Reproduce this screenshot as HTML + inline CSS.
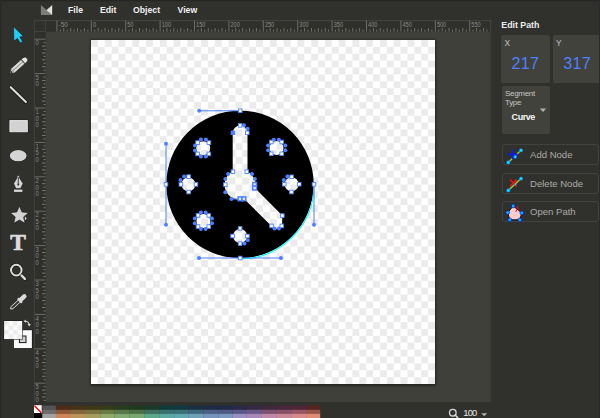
<!DOCTYPE html>
<html><head><meta charset="utf-8">
<style>
html,body{margin:0;padding:0;overflow:hidden;}
body{width:600px;height:418px;overflow:hidden;background:#30302d;position:relative;font-family:"Liberation Sans",sans-serif;}
.abs{position:absolute;}
.menu{position:absolute;top:3.5px;font-size:8.7px;font-weight:bold;color:#f2f2f2;line-height:12px;}
.panel-title{position:absolute;left:501.3px;top:19.6px;font-size:8.8px;font-weight:bold;color:#ececec;}
.box{position:absolute;background:#42423d;border-radius:2px;}
.lbl{position:absolute;font-size:8px;color:#b4b4b0;}
.num{position:absolute;font-size:16.1px;letter-spacing:0.35px;color:#4f80ff;}
.btn{position:absolute;left:501.5px;width:97px;height:21px;border:1px solid #42423e;border-radius:3px;box-sizing:border-box;}
.btxt{position:absolute;left:27.6px;top:4.2px;letter-spacing:-0.04px;font-size:9.6px;color:#acaca8;white-space:nowrap;}
svg{position:absolute;left:0;top:0;}
</style></head><body>
<div class="btn" style="top:144.3px"><div class="btxt">Add Node</div></div>
<div class="btn" style="top:173.3px"><div class="btxt">Delete Node</div></div>
<div class="btn" style="top:201.3px"><div class="btxt">Open Path</div></div>
<div class="box" style="left:501.3px;top:34.6px;width:48.3px;height:48px"></div>
<div class="box" style="left:553px;top:34.6px;width:60px;height:48px"></div>
<div class="box" style="left:501.5px;top:86px;width:48.3px;height:48.2px"></div>
<svg width="600" height="418" viewBox="0 0 600 418">
<defs>
<pattern id="chk" x="91" y="40" width="13.76" height="13.76" patternUnits="userSpaceOnUse">
<rect width="13.76" height="13.76" fill="#fff"/>
<rect width="6.88" height="6.88" fill="#ebebeb"/>
<rect x="6.88" y="6.88" width="6.88" height="6.88" fill="#ebebeb"/>
</pattern>
<filter id="sh" x="-5%" y="-5%" width="110%" height="110%"><feGaussianBlur stdDeviation="0.9"/></filter>
<pattern id="chk2" x="4.1" y="321" width="9" height="9" patternUnits="userSpaceOnUse">
<rect width="9" height="9" fill="#fbfbfb"/>
<rect width="4.5" height="4.5" fill="#ececec"/>
<rect x="4.5" y="4.5" width="4.5" height="4.5" fill="#ececec"/>
</pattern>
</defs>
<rect x="0" y="0" width="600" height="1.2" fill="#252523"/>
<rect x="0" y="0" width="1.2" height="418" fill="#282826"/>
<rect x="599" y="0" width="1" height="418" fill="#2a2a28"/>
<!-- workarea -->
<rect x="45.6" y="31.5" width="445.2" height="370.6" fill="#40403a"/>
<!-- ruler corner lines -->
<rect x="34" y="20" width="456.8" height="11.5" fill="#2f2f2c"/>
<rect x="34" y="31.5" width="11.6" height="370.6" fill="#2f2f2c"/>
<line x1="34" y1="20.7" x2="491.2" y2="20.7" stroke="#4a4a46" stroke-width="0.9"/>
<line x1="490.7" y1="20.5" x2="490.7" y2="31.5" stroke="#4a4a46" stroke-width="0.9"/>
<line x1="34.4" y1="20" x2="34.4" y2="402" stroke="#464642" stroke-width="0.8"/>
<line x1="45.6" y1="20" x2="45.6" y2="31.5" stroke="#464642" stroke-width="0.8"/>
<line x1="34" y1="31.5" x2="45.6" y2="31.5" stroke="#464642" stroke-width="0.8"/>
<line x1="56.90" y1="20.6" x2="56.90" y2="31.6" stroke="#74746e" stroke-width="0.9"/>
<text x="58.50" y="26.9" font-size="6.3" fill="#8e8e88" textLength="9.3" lengthAdjust="spacingAndGlyphs">-50</text>
<line x1="60.34" y1="29.60" x2="60.34" y2="31.6" stroke="#7a7a74" stroke-width="0.9"/>
<line x1="63.78" y1="28.10" x2="63.78" y2="31.6" stroke="#7a7a74" stroke-width="0.9"/>
<line x1="67.22" y1="29.60" x2="67.22" y2="31.6" stroke="#7a7a74" stroke-width="0.9"/>
<line x1="70.66" y1="28.10" x2="70.66" y2="31.6" stroke="#7a7a74" stroke-width="0.9"/>
<line x1="74.10" y1="29.60" x2="74.10" y2="31.6" stroke="#7a7a74" stroke-width="0.9"/>
<line x1="77.54" y1="28.10" x2="77.54" y2="31.6" stroke="#7a7a74" stroke-width="0.9"/>
<line x1="80.98" y1="29.60" x2="80.98" y2="31.6" stroke="#7a7a74" stroke-width="0.9"/>
<line x1="84.42" y1="28.10" x2="84.42" y2="31.6" stroke="#7a7a74" stroke-width="0.9"/>
<line x1="87.86" y1="29.60" x2="87.86" y2="31.6" stroke="#7a7a74" stroke-width="0.9"/>
<line x1="91.30" y1="20.6" x2="91.30" y2="31.6" stroke="#74746e" stroke-width="0.9"/>
<text x="92.90" y="26.9" font-size="6.3" fill="#8e8e88" textLength="3.1" lengthAdjust="spacingAndGlyphs">0</text>
<line x1="94.74" y1="29.60" x2="94.74" y2="31.6" stroke="#7a7a74" stroke-width="0.9"/>
<line x1="98.18" y1="28.10" x2="98.18" y2="31.6" stroke="#7a7a74" stroke-width="0.9"/>
<line x1="101.62" y1="29.60" x2="101.62" y2="31.6" stroke="#7a7a74" stroke-width="0.9"/>
<line x1="105.06" y1="28.10" x2="105.06" y2="31.6" stroke="#7a7a74" stroke-width="0.9"/>
<line x1="108.50" y1="29.60" x2="108.50" y2="31.6" stroke="#7a7a74" stroke-width="0.9"/>
<line x1="111.94" y1="28.10" x2="111.94" y2="31.6" stroke="#7a7a74" stroke-width="0.9"/>
<line x1="115.38" y1="29.60" x2="115.38" y2="31.6" stroke="#7a7a74" stroke-width="0.9"/>
<line x1="118.82" y1="28.10" x2="118.82" y2="31.6" stroke="#7a7a74" stroke-width="0.9"/>
<line x1="122.26" y1="29.60" x2="122.26" y2="31.6" stroke="#7a7a74" stroke-width="0.9"/>
<line x1="125.70" y1="20.6" x2="125.70" y2="31.6" stroke="#74746e" stroke-width="0.9"/>
<text x="127.30" y="26.9" font-size="6.3" fill="#8e8e88" textLength="6.2" lengthAdjust="spacingAndGlyphs">50</text>
<line x1="129.14" y1="29.60" x2="129.14" y2="31.6" stroke="#7a7a74" stroke-width="0.9"/>
<line x1="132.58" y1="28.10" x2="132.58" y2="31.6" stroke="#7a7a74" stroke-width="0.9"/>
<line x1="136.02" y1="29.60" x2="136.02" y2="31.6" stroke="#7a7a74" stroke-width="0.9"/>
<line x1="139.46" y1="28.10" x2="139.46" y2="31.6" stroke="#7a7a74" stroke-width="0.9"/>
<line x1="142.90" y1="29.60" x2="142.90" y2="31.6" stroke="#7a7a74" stroke-width="0.9"/>
<line x1="146.34" y1="28.10" x2="146.34" y2="31.6" stroke="#7a7a74" stroke-width="0.9"/>
<line x1="149.78" y1="29.60" x2="149.78" y2="31.6" stroke="#7a7a74" stroke-width="0.9"/>
<line x1="153.22" y1="28.10" x2="153.22" y2="31.6" stroke="#7a7a74" stroke-width="0.9"/>
<line x1="156.66" y1="29.60" x2="156.66" y2="31.6" stroke="#7a7a74" stroke-width="0.9"/>
<line x1="160.10" y1="20.6" x2="160.10" y2="31.6" stroke="#74746e" stroke-width="0.9"/>
<text x="161.70" y="26.9" font-size="6.3" fill="#8e8e88" textLength="9.3" lengthAdjust="spacingAndGlyphs">100</text>
<line x1="163.54" y1="29.60" x2="163.54" y2="31.6" stroke="#7a7a74" stroke-width="0.9"/>
<line x1="166.98" y1="28.10" x2="166.98" y2="31.6" stroke="#7a7a74" stroke-width="0.9"/>
<line x1="170.42" y1="29.60" x2="170.42" y2="31.6" stroke="#7a7a74" stroke-width="0.9"/>
<line x1="173.86" y1="28.10" x2="173.86" y2="31.6" stroke="#7a7a74" stroke-width="0.9"/>
<line x1="177.30" y1="29.60" x2="177.30" y2="31.6" stroke="#7a7a74" stroke-width="0.9"/>
<line x1="180.74" y1="28.10" x2="180.74" y2="31.6" stroke="#7a7a74" stroke-width="0.9"/>
<line x1="184.18" y1="29.60" x2="184.18" y2="31.6" stroke="#7a7a74" stroke-width="0.9"/>
<line x1="187.62" y1="28.10" x2="187.62" y2="31.6" stroke="#7a7a74" stroke-width="0.9"/>
<line x1="191.06" y1="29.60" x2="191.06" y2="31.6" stroke="#7a7a74" stroke-width="0.9"/>
<line x1="194.50" y1="20.6" x2="194.50" y2="31.6" stroke="#74746e" stroke-width="0.9"/>
<text x="196.10" y="26.9" font-size="6.3" fill="#8e8e88" textLength="9.3" lengthAdjust="spacingAndGlyphs">150</text>
<line x1="197.94" y1="29.60" x2="197.94" y2="31.6" stroke="#7a7a74" stroke-width="0.9"/>
<line x1="201.38" y1="28.10" x2="201.38" y2="31.6" stroke="#7a7a74" stroke-width="0.9"/>
<line x1="204.82" y1="29.60" x2="204.82" y2="31.6" stroke="#7a7a74" stroke-width="0.9"/>
<line x1="208.26" y1="28.10" x2="208.26" y2="31.6" stroke="#7a7a74" stroke-width="0.9"/>
<line x1="211.70" y1="29.60" x2="211.70" y2="31.6" stroke="#7a7a74" stroke-width="0.9"/>
<line x1="215.14" y1="28.10" x2="215.14" y2="31.6" stroke="#7a7a74" stroke-width="0.9"/>
<line x1="218.58" y1="29.60" x2="218.58" y2="31.6" stroke="#7a7a74" stroke-width="0.9"/>
<line x1="222.02" y1="28.10" x2="222.02" y2="31.6" stroke="#7a7a74" stroke-width="0.9"/>
<line x1="225.46" y1="29.60" x2="225.46" y2="31.6" stroke="#7a7a74" stroke-width="0.9"/>
<line x1="228.90" y1="20.6" x2="228.90" y2="31.6" stroke="#74746e" stroke-width="0.9"/>
<text x="230.50" y="26.9" font-size="6.3" fill="#8e8e88" textLength="9.3" lengthAdjust="spacingAndGlyphs">200</text>
<line x1="232.34" y1="29.60" x2="232.34" y2="31.6" stroke="#7a7a74" stroke-width="0.9"/>
<line x1="235.78" y1="28.10" x2="235.78" y2="31.6" stroke="#7a7a74" stroke-width="0.9"/>
<line x1="239.22" y1="29.60" x2="239.22" y2="31.6" stroke="#7a7a74" stroke-width="0.9"/>
<line x1="242.66" y1="28.10" x2="242.66" y2="31.6" stroke="#7a7a74" stroke-width="0.9"/>
<line x1="246.10" y1="29.60" x2="246.10" y2="31.6" stroke="#7a7a74" stroke-width="0.9"/>
<line x1="249.54" y1="28.10" x2="249.54" y2="31.6" stroke="#7a7a74" stroke-width="0.9"/>
<line x1="252.98" y1="29.60" x2="252.98" y2="31.6" stroke="#7a7a74" stroke-width="0.9"/>
<line x1="256.42" y1="28.10" x2="256.42" y2="31.6" stroke="#7a7a74" stroke-width="0.9"/>
<line x1="259.86" y1="29.60" x2="259.86" y2="31.6" stroke="#7a7a74" stroke-width="0.9"/>
<line x1="263.30" y1="20.6" x2="263.30" y2="31.6" stroke="#74746e" stroke-width="0.9"/>
<text x="264.90" y="26.9" font-size="6.3" fill="#8e8e88" textLength="9.3" lengthAdjust="spacingAndGlyphs">250</text>
<line x1="266.74" y1="29.60" x2="266.74" y2="31.6" stroke="#7a7a74" stroke-width="0.9"/>
<line x1="270.18" y1="28.10" x2="270.18" y2="31.6" stroke="#7a7a74" stroke-width="0.9"/>
<line x1="273.62" y1="29.60" x2="273.62" y2="31.6" stroke="#7a7a74" stroke-width="0.9"/>
<line x1="277.06" y1="28.10" x2="277.06" y2="31.6" stroke="#7a7a74" stroke-width="0.9"/>
<line x1="280.50" y1="29.60" x2="280.50" y2="31.6" stroke="#7a7a74" stroke-width="0.9"/>
<line x1="283.94" y1="28.10" x2="283.94" y2="31.6" stroke="#7a7a74" stroke-width="0.9"/>
<line x1="287.38" y1="29.60" x2="287.38" y2="31.6" stroke="#7a7a74" stroke-width="0.9"/>
<line x1="290.82" y1="28.10" x2="290.82" y2="31.6" stroke="#7a7a74" stroke-width="0.9"/>
<line x1="294.26" y1="29.60" x2="294.26" y2="31.6" stroke="#7a7a74" stroke-width="0.9"/>
<line x1="297.70" y1="20.6" x2="297.70" y2="31.6" stroke="#74746e" stroke-width="0.9"/>
<text x="299.30" y="26.9" font-size="6.3" fill="#8e8e88" textLength="9.3" lengthAdjust="spacingAndGlyphs">300</text>
<line x1="301.14" y1="29.60" x2="301.14" y2="31.6" stroke="#7a7a74" stroke-width="0.9"/>
<line x1="304.58" y1="28.10" x2="304.58" y2="31.6" stroke="#7a7a74" stroke-width="0.9"/>
<line x1="308.02" y1="29.60" x2="308.02" y2="31.6" stroke="#7a7a74" stroke-width="0.9"/>
<line x1="311.46" y1="28.10" x2="311.46" y2="31.6" stroke="#7a7a74" stroke-width="0.9"/>
<line x1="314.90" y1="29.60" x2="314.90" y2="31.6" stroke="#7a7a74" stroke-width="0.9"/>
<line x1="318.34" y1="28.10" x2="318.34" y2="31.6" stroke="#7a7a74" stroke-width="0.9"/>
<line x1="321.78" y1="29.60" x2="321.78" y2="31.6" stroke="#7a7a74" stroke-width="0.9"/>
<line x1="325.22" y1="28.10" x2="325.22" y2="31.6" stroke="#7a7a74" stroke-width="0.9"/>
<line x1="328.66" y1="29.60" x2="328.66" y2="31.6" stroke="#7a7a74" stroke-width="0.9"/>
<line x1="332.10" y1="20.6" x2="332.10" y2="31.6" stroke="#74746e" stroke-width="0.9"/>
<text x="333.70" y="26.9" font-size="6.3" fill="#8e8e88" textLength="9.3" lengthAdjust="spacingAndGlyphs">350</text>
<line x1="335.54" y1="29.60" x2="335.54" y2="31.6" stroke="#7a7a74" stroke-width="0.9"/>
<line x1="338.98" y1="28.10" x2="338.98" y2="31.6" stroke="#7a7a74" stroke-width="0.9"/>
<line x1="342.42" y1="29.60" x2="342.42" y2="31.6" stroke="#7a7a74" stroke-width="0.9"/>
<line x1="345.86" y1="28.10" x2="345.86" y2="31.6" stroke="#7a7a74" stroke-width="0.9"/>
<line x1="349.30" y1="29.60" x2="349.30" y2="31.6" stroke="#7a7a74" stroke-width="0.9"/>
<line x1="352.74" y1="28.10" x2="352.74" y2="31.6" stroke="#7a7a74" stroke-width="0.9"/>
<line x1="356.18" y1="29.60" x2="356.18" y2="31.6" stroke="#7a7a74" stroke-width="0.9"/>
<line x1="359.62" y1="28.10" x2="359.62" y2="31.6" stroke="#7a7a74" stroke-width="0.9"/>
<line x1="363.06" y1="29.60" x2="363.06" y2="31.6" stroke="#7a7a74" stroke-width="0.9"/>
<line x1="366.50" y1="20.6" x2="366.50" y2="31.6" stroke="#74746e" stroke-width="0.9"/>
<text x="368.10" y="26.9" font-size="6.3" fill="#8e8e88" textLength="9.3" lengthAdjust="spacingAndGlyphs">400</text>
<line x1="369.94" y1="29.60" x2="369.94" y2="31.6" stroke="#7a7a74" stroke-width="0.9"/>
<line x1="373.38" y1="28.10" x2="373.38" y2="31.6" stroke="#7a7a74" stroke-width="0.9"/>
<line x1="376.82" y1="29.60" x2="376.82" y2="31.6" stroke="#7a7a74" stroke-width="0.9"/>
<line x1="380.26" y1="28.10" x2="380.26" y2="31.6" stroke="#7a7a74" stroke-width="0.9"/>
<line x1="383.70" y1="29.60" x2="383.70" y2="31.6" stroke="#7a7a74" stroke-width="0.9"/>
<line x1="387.14" y1="28.10" x2="387.14" y2="31.6" stroke="#7a7a74" stroke-width="0.9"/>
<line x1="390.58" y1="29.60" x2="390.58" y2="31.6" stroke="#7a7a74" stroke-width="0.9"/>
<line x1="394.02" y1="28.10" x2="394.02" y2="31.6" stroke="#7a7a74" stroke-width="0.9"/>
<line x1="397.46" y1="29.60" x2="397.46" y2="31.6" stroke="#7a7a74" stroke-width="0.9"/>
<line x1="400.90" y1="20.6" x2="400.90" y2="31.6" stroke="#74746e" stroke-width="0.9"/>
<text x="402.50" y="26.9" font-size="6.3" fill="#8e8e88" textLength="9.3" lengthAdjust="spacingAndGlyphs">450</text>
<line x1="404.34" y1="29.60" x2="404.34" y2="31.6" stroke="#7a7a74" stroke-width="0.9"/>
<line x1="407.78" y1="28.10" x2="407.78" y2="31.6" stroke="#7a7a74" stroke-width="0.9"/>
<line x1="411.22" y1="29.60" x2="411.22" y2="31.6" stroke="#7a7a74" stroke-width="0.9"/>
<line x1="414.66" y1="28.10" x2="414.66" y2="31.6" stroke="#7a7a74" stroke-width="0.9"/>
<line x1="418.10" y1="29.60" x2="418.10" y2="31.6" stroke="#7a7a74" stroke-width="0.9"/>
<line x1="421.54" y1="28.10" x2="421.54" y2="31.6" stroke="#7a7a74" stroke-width="0.9"/>
<line x1="424.98" y1="29.60" x2="424.98" y2="31.6" stroke="#7a7a74" stroke-width="0.9"/>
<line x1="428.42" y1="28.10" x2="428.42" y2="31.6" stroke="#7a7a74" stroke-width="0.9"/>
<line x1="431.86" y1="29.60" x2="431.86" y2="31.6" stroke="#7a7a74" stroke-width="0.9"/>
<line x1="435.30" y1="20.6" x2="435.30" y2="31.6" stroke="#74746e" stroke-width="0.9"/>
<text x="436.90" y="26.9" font-size="6.3" fill="#8e8e88" textLength="9.3" lengthAdjust="spacingAndGlyphs">500</text>
<line x1="438.74" y1="29.60" x2="438.74" y2="31.6" stroke="#7a7a74" stroke-width="0.9"/>
<line x1="442.18" y1="28.10" x2="442.18" y2="31.6" stroke="#7a7a74" stroke-width="0.9"/>
<line x1="445.62" y1="29.60" x2="445.62" y2="31.6" stroke="#7a7a74" stroke-width="0.9"/>
<line x1="449.06" y1="28.10" x2="449.06" y2="31.6" stroke="#7a7a74" stroke-width="0.9"/>
<line x1="452.50" y1="29.60" x2="452.50" y2="31.6" stroke="#7a7a74" stroke-width="0.9"/>
<line x1="455.94" y1="28.10" x2="455.94" y2="31.6" stroke="#7a7a74" stroke-width="0.9"/>
<line x1="459.38" y1="29.60" x2="459.38" y2="31.6" stroke="#7a7a74" stroke-width="0.9"/>
<line x1="462.82" y1="28.10" x2="462.82" y2="31.6" stroke="#7a7a74" stroke-width="0.9"/>
<line x1="466.26" y1="29.60" x2="466.26" y2="31.6" stroke="#7a7a74" stroke-width="0.9"/>
<line x1="469.70" y1="20.6" x2="469.70" y2="31.6" stroke="#74746e" stroke-width="0.9"/>
<text x="471.30" y="26.9" font-size="6.3" fill="#8e8e88" textLength="9.3" lengthAdjust="spacingAndGlyphs">550</text>
<line x1="473.14" y1="29.60" x2="473.14" y2="31.6" stroke="#7a7a74" stroke-width="0.9"/>
<line x1="476.58" y1="28.10" x2="476.58" y2="31.6" stroke="#7a7a74" stroke-width="0.9"/>
<line x1="480.02" y1="29.60" x2="480.02" y2="31.6" stroke="#7a7a74" stroke-width="0.9"/>
<line x1="483.46" y1="28.10" x2="483.46" y2="31.6" stroke="#7a7a74" stroke-width="0.9"/>
<line x1="486.90" y1="29.60" x2="486.90" y2="31.6" stroke="#7a7a74" stroke-width="0.9"/>
<line x1="34.8" y1="39.20" x2="45.6" y2="39.20" stroke="#74746e" stroke-width="0.9"/>
<text x="35.6" y="45.40" font-size="6.5" fill="#8a8a84" textLength="3.3" lengthAdjust="spacingAndGlyphs">0</text>
<line x1="43.60" y1="42.64" x2="45.6" y2="42.64" stroke="#7a7a74" stroke-width="1"/>
<line x1="42.10" y1="46.08" x2="45.6" y2="46.08" stroke="#7a7a74" stroke-width="1"/>
<line x1="43.60" y1="49.52" x2="45.6" y2="49.52" stroke="#7a7a74" stroke-width="1"/>
<line x1="42.10" y1="52.96" x2="45.6" y2="52.96" stroke="#7a7a74" stroke-width="1"/>
<line x1="43.60" y1="56.40" x2="45.6" y2="56.40" stroke="#7a7a74" stroke-width="1"/>
<line x1="42.10" y1="59.84" x2="45.6" y2="59.84" stroke="#7a7a74" stroke-width="1"/>
<line x1="43.60" y1="63.28" x2="45.6" y2="63.28" stroke="#7a7a74" stroke-width="1"/>
<line x1="42.10" y1="66.72" x2="45.6" y2="66.72" stroke="#7a7a74" stroke-width="1"/>
<line x1="43.60" y1="70.16" x2="45.6" y2="70.16" stroke="#7a7a74" stroke-width="1"/>
<line x1="34.8" y1="73.60" x2="45.6" y2="73.60" stroke="#74746e" stroke-width="0.9"/>
<text x="35.6" y="79.80" font-size="6.5" fill="#8a8a84" textLength="3.3" lengthAdjust="spacingAndGlyphs">5</text>
<text x="35.6" y="86.30" font-size="6.5" fill="#8a8a84" textLength="3.3" lengthAdjust="spacingAndGlyphs">0</text>
<line x1="43.60" y1="77.04" x2="45.6" y2="77.04" stroke="#7a7a74" stroke-width="1"/>
<line x1="42.10" y1="80.48" x2="45.6" y2="80.48" stroke="#7a7a74" stroke-width="1"/>
<line x1="43.60" y1="83.92" x2="45.6" y2="83.92" stroke="#7a7a74" stroke-width="1"/>
<line x1="42.10" y1="87.36" x2="45.6" y2="87.36" stroke="#7a7a74" stroke-width="1"/>
<line x1="43.60" y1="90.80" x2="45.6" y2="90.80" stroke="#7a7a74" stroke-width="1"/>
<line x1="42.10" y1="94.24" x2="45.6" y2="94.24" stroke="#7a7a74" stroke-width="1"/>
<line x1="43.60" y1="97.68" x2="45.6" y2="97.68" stroke="#7a7a74" stroke-width="1"/>
<line x1="42.10" y1="101.12" x2="45.6" y2="101.12" stroke="#7a7a74" stroke-width="1"/>
<line x1="43.60" y1="104.56" x2="45.6" y2="104.56" stroke="#7a7a74" stroke-width="1"/>
<line x1="34.8" y1="108.00" x2="45.6" y2="108.00" stroke="#74746e" stroke-width="0.9"/>
<text x="35.6" y="114.20" font-size="6.5" fill="#8a8a84" textLength="3.3" lengthAdjust="spacingAndGlyphs">1</text>
<text x="35.6" y="120.70" font-size="6.5" fill="#8a8a84" textLength="3.3" lengthAdjust="spacingAndGlyphs">0</text>
<text x="35.6" y="127.20" font-size="6.5" fill="#8a8a84" textLength="3.3" lengthAdjust="spacingAndGlyphs">0</text>
<line x1="43.60" y1="111.44" x2="45.6" y2="111.44" stroke="#7a7a74" stroke-width="1"/>
<line x1="42.10" y1="114.88" x2="45.6" y2="114.88" stroke="#7a7a74" stroke-width="1"/>
<line x1="43.60" y1="118.32" x2="45.6" y2="118.32" stroke="#7a7a74" stroke-width="1"/>
<line x1="42.10" y1="121.76" x2="45.6" y2="121.76" stroke="#7a7a74" stroke-width="1"/>
<line x1="43.60" y1="125.20" x2="45.6" y2="125.20" stroke="#7a7a74" stroke-width="1"/>
<line x1="42.10" y1="128.64" x2="45.6" y2="128.64" stroke="#7a7a74" stroke-width="1"/>
<line x1="43.60" y1="132.08" x2="45.6" y2="132.08" stroke="#7a7a74" stroke-width="1"/>
<line x1="42.10" y1="135.52" x2="45.6" y2="135.52" stroke="#7a7a74" stroke-width="1"/>
<line x1="43.60" y1="138.96" x2="45.6" y2="138.96" stroke="#7a7a74" stroke-width="1"/>
<line x1="34.8" y1="142.40" x2="45.6" y2="142.40" stroke="#74746e" stroke-width="0.9"/>
<text x="35.6" y="148.60" font-size="6.5" fill="#8a8a84" textLength="3.3" lengthAdjust="spacingAndGlyphs">1</text>
<text x="35.6" y="155.10" font-size="6.5" fill="#8a8a84" textLength="3.3" lengthAdjust="spacingAndGlyphs">5</text>
<text x="35.6" y="161.60" font-size="6.5" fill="#8a8a84" textLength="3.3" lengthAdjust="spacingAndGlyphs">0</text>
<line x1="43.60" y1="145.84" x2="45.6" y2="145.84" stroke="#7a7a74" stroke-width="1"/>
<line x1="42.10" y1="149.28" x2="45.6" y2="149.28" stroke="#7a7a74" stroke-width="1"/>
<line x1="43.60" y1="152.72" x2="45.6" y2="152.72" stroke="#7a7a74" stroke-width="1"/>
<line x1="42.10" y1="156.16" x2="45.6" y2="156.16" stroke="#7a7a74" stroke-width="1"/>
<line x1="43.60" y1="159.60" x2="45.6" y2="159.60" stroke="#7a7a74" stroke-width="1"/>
<line x1="42.10" y1="163.04" x2="45.6" y2="163.04" stroke="#7a7a74" stroke-width="1"/>
<line x1="43.60" y1="166.48" x2="45.6" y2="166.48" stroke="#7a7a74" stroke-width="1"/>
<line x1="42.10" y1="169.92" x2="45.6" y2="169.92" stroke="#7a7a74" stroke-width="1"/>
<line x1="43.60" y1="173.36" x2="45.6" y2="173.36" stroke="#7a7a74" stroke-width="1"/>
<line x1="34.8" y1="176.80" x2="45.6" y2="176.80" stroke="#74746e" stroke-width="0.9"/>
<text x="35.6" y="183.00" font-size="6.5" fill="#8a8a84" textLength="3.3" lengthAdjust="spacingAndGlyphs">2</text>
<text x="35.6" y="189.50" font-size="6.5" fill="#8a8a84" textLength="3.3" lengthAdjust="spacingAndGlyphs">0</text>
<text x="35.6" y="196.00" font-size="6.5" fill="#8a8a84" textLength="3.3" lengthAdjust="spacingAndGlyphs">0</text>
<line x1="43.60" y1="180.24" x2="45.6" y2="180.24" stroke="#7a7a74" stroke-width="1"/>
<line x1="42.10" y1="183.68" x2="45.6" y2="183.68" stroke="#7a7a74" stroke-width="1"/>
<line x1="43.60" y1="187.12" x2="45.6" y2="187.12" stroke="#7a7a74" stroke-width="1"/>
<line x1="42.10" y1="190.56" x2="45.6" y2="190.56" stroke="#7a7a74" stroke-width="1"/>
<line x1="43.60" y1="194.00" x2="45.6" y2="194.00" stroke="#7a7a74" stroke-width="1"/>
<line x1="42.10" y1="197.44" x2="45.6" y2="197.44" stroke="#7a7a74" stroke-width="1"/>
<line x1="43.60" y1="200.88" x2="45.6" y2="200.88" stroke="#7a7a74" stroke-width="1"/>
<line x1="42.10" y1="204.32" x2="45.6" y2="204.32" stroke="#7a7a74" stroke-width="1"/>
<line x1="43.60" y1="207.76" x2="45.6" y2="207.76" stroke="#7a7a74" stroke-width="1"/>
<line x1="34.8" y1="211.20" x2="45.6" y2="211.20" stroke="#74746e" stroke-width="0.9"/>
<text x="35.6" y="217.40" font-size="6.5" fill="#8a8a84" textLength="3.3" lengthAdjust="spacingAndGlyphs">2</text>
<text x="35.6" y="223.90" font-size="6.5" fill="#8a8a84" textLength="3.3" lengthAdjust="spacingAndGlyphs">5</text>
<text x="35.6" y="230.40" font-size="6.5" fill="#8a8a84" textLength="3.3" lengthAdjust="spacingAndGlyphs">0</text>
<line x1="43.60" y1="214.64" x2="45.6" y2="214.64" stroke="#7a7a74" stroke-width="1"/>
<line x1="42.10" y1="218.08" x2="45.6" y2="218.08" stroke="#7a7a74" stroke-width="1"/>
<line x1="43.60" y1="221.52" x2="45.6" y2="221.52" stroke="#7a7a74" stroke-width="1"/>
<line x1="42.10" y1="224.96" x2="45.6" y2="224.96" stroke="#7a7a74" stroke-width="1"/>
<line x1="43.60" y1="228.40" x2="45.6" y2="228.40" stroke="#7a7a74" stroke-width="1"/>
<line x1="42.10" y1="231.84" x2="45.6" y2="231.84" stroke="#7a7a74" stroke-width="1"/>
<line x1="43.60" y1="235.28" x2="45.6" y2="235.28" stroke="#7a7a74" stroke-width="1"/>
<line x1="42.10" y1="238.72" x2="45.6" y2="238.72" stroke="#7a7a74" stroke-width="1"/>
<line x1="43.60" y1="242.16" x2="45.6" y2="242.16" stroke="#7a7a74" stroke-width="1"/>
<line x1="34.8" y1="245.60" x2="45.6" y2="245.60" stroke="#74746e" stroke-width="0.9"/>
<text x="35.6" y="251.80" font-size="6.5" fill="#8a8a84" textLength="3.3" lengthAdjust="spacingAndGlyphs">3</text>
<text x="35.6" y="258.30" font-size="6.5" fill="#8a8a84" textLength="3.3" lengthAdjust="spacingAndGlyphs">0</text>
<text x="35.6" y="264.80" font-size="6.5" fill="#8a8a84" textLength="3.3" lengthAdjust="spacingAndGlyphs">0</text>
<line x1="43.60" y1="249.04" x2="45.6" y2="249.04" stroke="#7a7a74" stroke-width="1"/>
<line x1="42.10" y1="252.48" x2="45.6" y2="252.48" stroke="#7a7a74" stroke-width="1"/>
<line x1="43.60" y1="255.92" x2="45.6" y2="255.92" stroke="#7a7a74" stroke-width="1"/>
<line x1="42.10" y1="259.36" x2="45.6" y2="259.36" stroke="#7a7a74" stroke-width="1"/>
<line x1="43.60" y1="262.80" x2="45.6" y2="262.80" stroke="#7a7a74" stroke-width="1"/>
<line x1="42.10" y1="266.24" x2="45.6" y2="266.24" stroke="#7a7a74" stroke-width="1"/>
<line x1="43.60" y1="269.68" x2="45.6" y2="269.68" stroke="#7a7a74" stroke-width="1"/>
<line x1="42.10" y1="273.12" x2="45.6" y2="273.12" stroke="#7a7a74" stroke-width="1"/>
<line x1="43.60" y1="276.56" x2="45.6" y2="276.56" stroke="#7a7a74" stroke-width="1"/>
<line x1="34.8" y1="280.00" x2="45.6" y2="280.00" stroke="#74746e" stroke-width="0.9"/>
<text x="35.6" y="286.20" font-size="6.5" fill="#8a8a84" textLength="3.3" lengthAdjust="spacingAndGlyphs">3</text>
<text x="35.6" y="292.70" font-size="6.5" fill="#8a8a84" textLength="3.3" lengthAdjust="spacingAndGlyphs">5</text>
<text x="35.6" y="299.20" font-size="6.5" fill="#8a8a84" textLength="3.3" lengthAdjust="spacingAndGlyphs">0</text>
<line x1="43.60" y1="283.44" x2="45.6" y2="283.44" stroke="#7a7a74" stroke-width="1"/>
<line x1="42.10" y1="286.88" x2="45.6" y2="286.88" stroke="#7a7a74" stroke-width="1"/>
<line x1="43.60" y1="290.32" x2="45.6" y2="290.32" stroke="#7a7a74" stroke-width="1"/>
<line x1="42.10" y1="293.76" x2="45.6" y2="293.76" stroke="#7a7a74" stroke-width="1"/>
<line x1="43.60" y1="297.20" x2="45.6" y2="297.20" stroke="#7a7a74" stroke-width="1"/>
<line x1="42.10" y1="300.64" x2="45.6" y2="300.64" stroke="#7a7a74" stroke-width="1"/>
<line x1="43.60" y1="304.08" x2="45.6" y2="304.08" stroke="#7a7a74" stroke-width="1"/>
<line x1="42.10" y1="307.52" x2="45.6" y2="307.52" stroke="#7a7a74" stroke-width="1"/>
<line x1="43.60" y1="310.96" x2="45.6" y2="310.96" stroke="#7a7a74" stroke-width="1"/>
<line x1="34.8" y1="314.40" x2="45.6" y2="314.40" stroke="#74746e" stroke-width="0.9"/>
<text x="35.6" y="320.60" font-size="6.5" fill="#8a8a84" textLength="3.3" lengthAdjust="spacingAndGlyphs">4</text>
<text x="35.6" y="327.10" font-size="6.5" fill="#8a8a84" textLength="3.3" lengthAdjust="spacingAndGlyphs">0</text>
<text x="35.6" y="333.60" font-size="6.5" fill="#8a8a84" textLength="3.3" lengthAdjust="spacingAndGlyphs">0</text>
<line x1="43.60" y1="317.84" x2="45.6" y2="317.84" stroke="#7a7a74" stroke-width="1"/>
<line x1="42.10" y1="321.28" x2="45.6" y2="321.28" stroke="#7a7a74" stroke-width="1"/>
<line x1="43.60" y1="324.72" x2="45.6" y2="324.72" stroke="#7a7a74" stroke-width="1"/>
<line x1="42.10" y1="328.16" x2="45.6" y2="328.16" stroke="#7a7a74" stroke-width="1"/>
<line x1="43.60" y1="331.60" x2="45.6" y2="331.60" stroke="#7a7a74" stroke-width="1"/>
<line x1="42.10" y1="335.04" x2="45.6" y2="335.04" stroke="#7a7a74" stroke-width="1"/>
<line x1="43.60" y1="338.48" x2="45.6" y2="338.48" stroke="#7a7a74" stroke-width="1"/>
<line x1="42.10" y1="341.92" x2="45.6" y2="341.92" stroke="#7a7a74" stroke-width="1"/>
<line x1="43.60" y1="345.36" x2="45.6" y2="345.36" stroke="#7a7a74" stroke-width="1"/>
<line x1="34.8" y1="348.80" x2="45.6" y2="348.80" stroke="#74746e" stroke-width="0.9"/>
<text x="35.6" y="355.00" font-size="6.5" fill="#8a8a84" textLength="3.3" lengthAdjust="spacingAndGlyphs">4</text>
<text x="35.6" y="361.50" font-size="6.5" fill="#8a8a84" textLength="3.3" lengthAdjust="spacingAndGlyphs">5</text>
<text x="35.6" y="368.00" font-size="6.5" fill="#8a8a84" textLength="3.3" lengthAdjust="spacingAndGlyphs">0</text>
<line x1="43.60" y1="352.24" x2="45.6" y2="352.24" stroke="#7a7a74" stroke-width="1"/>
<line x1="42.10" y1="355.68" x2="45.6" y2="355.68" stroke="#7a7a74" stroke-width="1"/>
<line x1="43.60" y1="359.12" x2="45.6" y2="359.12" stroke="#7a7a74" stroke-width="1"/>
<line x1="42.10" y1="362.56" x2="45.6" y2="362.56" stroke="#7a7a74" stroke-width="1"/>
<line x1="43.60" y1="366.00" x2="45.6" y2="366.00" stroke="#7a7a74" stroke-width="1"/>
<line x1="42.10" y1="369.44" x2="45.6" y2="369.44" stroke="#7a7a74" stroke-width="1"/>
<line x1="43.60" y1="372.88" x2="45.6" y2="372.88" stroke="#7a7a74" stroke-width="1"/>
<line x1="42.10" y1="376.32" x2="45.6" y2="376.32" stroke="#7a7a74" stroke-width="1"/>
<line x1="43.60" y1="379.76" x2="45.6" y2="379.76" stroke="#7a7a74" stroke-width="1"/>
<line x1="34.8" y1="383.20" x2="45.6" y2="383.20" stroke="#74746e" stroke-width="0.9"/>
<text x="35.6" y="389.40" font-size="6.5" fill="#8a8a84" textLength="3.3" lengthAdjust="spacingAndGlyphs">5</text>
<text x="35.6" y="395.90" font-size="6.5" fill="#8a8a84" textLength="3.3" lengthAdjust="spacingAndGlyphs">0</text>
<text x="35.6" y="402.40" font-size="6.5" fill="#8a8a84" textLength="3.3" lengthAdjust="spacingAndGlyphs">0</text>
<line x1="43.60" y1="386.64" x2="45.6" y2="386.64" stroke="#7a7a74" stroke-width="1"/>
<line x1="42.10" y1="390.08" x2="45.6" y2="390.08" stroke="#7a7a74" stroke-width="1"/>
<line x1="43.60" y1="393.52" x2="45.6" y2="393.52" stroke="#7a7a74" stroke-width="1"/>
<line x1="42.10" y1="396.96" x2="45.6" y2="396.96" stroke="#7a7a74" stroke-width="1"/>
<line x1="43.60" y1="400.40" x2="45.6" y2="400.40" stroke="#7a7a74" stroke-width="1"/>
<!-- canvas -->
<rect x="90.2" y="39.4" width="345.8" height="346.4" fill="#000" opacity="0.45" filter="url(#sh)"/>
<rect x="91" y="40" width="344" height="344" fill="url(#chk)"/>
<path d="M166.30,184.40 A73.7,73.7 0 1,1 313.70,184.40 A73.7,73.7 0 1,1 166.30,184.40 Z M232.7,171.5 L232.7,133 A7.4,7.4 0 0,1 247.5,133 L247.5,171.5 A14.9,14.9 0 0,1 255.2,188.2 L282.3,215.4 L282.1,224.5 Q282,228.8 276.8,228.8 Q272.5,228.8 271.5,226 L244.2,198.9 A14.9,14.9 0 0,1 232.7,171.5 Z M196.20,148.20 A7.0,7.0 0 1,0 210.20,148.20 A7.0,7.0 0 1,0 196.20,148.20 Z M269.50,148.00 A7.0,7.0 0 1,0 283.50,148.00 A7.0,7.0 0 1,0 269.50,148.00 Z M181.40,184.40 A7.0,7.0 0 1,0 195.40,184.40 A7.0,7.0 0 1,0 181.40,184.40 Z M284.60,184.30 A7.0,7.0 0 1,0 298.60,184.30 A7.0,7.0 0 1,0 284.60,184.30 Z M196.40,221.00 A7.0,7.0 0 1,0 210.40,221.00 A7.0,7.0 0 1,0 196.40,221.00 Z M233.10,236.00 A7.0,7.0 0 1,0 247.10,236.00 A7.0,7.0 0 1,0 233.10,236.00 Z" fill="#000" fill-rule="evenodd"/>
<path d="M314.00,184.90 A74.0,74.0 0 0,1 240.00,258.90" fill="none" stroke="#00ffff" stroke-width="1.1"/>
<line x1="199.2" y1="110.8" x2="240.2" y2="110.8" stroke="#4f80ff" stroke-width="1"/>
<line x1="166.0" y1="143.7" x2="166.0" y2="224.7" stroke="#4f80ff" stroke-width="1"/>
<line x1="314.0" y1="184.3" x2="314.0" y2="224.7" stroke="#4f80ff" stroke-width="1"/>
<line x1="199.0" y1="258.0" x2="281.0" y2="258.0" stroke="#4f80ff" stroke-width="1"/>
<line x1="231.5" y1="199.0" x2="239.6" y2="199.0" stroke="#4f80ff" stroke-width="1"/>
<circle cx="200.9" cy="139.6" r="2.0" fill="#4f80ff"/>
<circle cx="205.9" cy="139.6" r="2.0" fill="#4f80ff"/>
<circle cx="195.0" cy="145.5" r="2.0" fill="#4f80ff"/>
<circle cx="195.0" cy="150.5" r="2.0" fill="#4f80ff"/>
<circle cx="200.9" cy="156.4" r="2.0" fill="#4f80ff"/>
<circle cx="205.9" cy="156.4" r="2.0" fill="#4f80ff"/>
<circle cx="273.8" cy="139.8" r="2.0" fill="#4f80ff"/>
<circle cx="278.9" cy="139.8" r="2.0" fill="#4f80ff"/>
<circle cx="268.1" cy="145.6" r="2.0" fill="#4f80ff"/>
<circle cx="268.1" cy="150.2" r="2.0" fill="#4f80ff"/>
<circle cx="285.3" cy="145.6" r="2.0" fill="#4f80ff"/>
<circle cx="285.3" cy="150.2" r="2.0" fill="#4f80ff"/>
<circle cx="184.1" cy="176.5" r="2.0" fill="#4f80ff"/>
<circle cx="180.5" cy="180.1" r="2.0" fill="#4f80ff"/>
<circle cx="287.4" cy="176.6" r="2.0" fill="#4f80ff"/>
<circle cx="283.8" cy="180.1" r="2.0" fill="#4f80ff"/>
<circle cx="200.9" cy="212.5" r="2.0" fill="#4f80ff"/>
<circle cx="205.6" cy="212.5" r="2.0" fill="#4f80ff"/>
<circle cx="194.8" cy="218.6" r="2.0" fill="#4f80ff"/>
<circle cx="194.8" cy="223.2" r="2.0" fill="#4f80ff"/>
<circle cx="212.0" cy="218.6" r="2.0" fill="#4f80ff"/>
<circle cx="212.0" cy="223.2" r="2.0" fill="#4f80ff"/>
<circle cx="200.9" cy="229.0" r="2.0" fill="#4f80ff"/>
<circle cx="205.6" cy="229.0" r="2.0" fill="#4f80ff"/>
<circle cx="247.8" cy="240.3" r="2.0" fill="#4f80ff"/>
<circle cx="244.5" cy="243.5" r="2.0" fill="#4f80ff"/>
<circle cx="244.0" cy="125.3" r="2.0" fill="#4f80ff"/>
<circle cx="247.6" cy="128.8" r="2.0" fill="#4f80ff"/>
<circle cx="228.1" cy="174.1" r="2.0" fill="#4f80ff"/>
<circle cx="225.3" cy="178.9" r="2.0" fill="#4f80ff"/>
<circle cx="225.3" cy="192.3" r="2.0" fill="#4f80ff"/>
<circle cx="231.5" cy="199.0" r="2.0" fill="#4f80ff"/>
<circle cx="252.0" cy="174.1" r="2.0" fill="#4f80ff"/>
<circle cx="254.9" cy="178.9" r="2.0" fill="#4f80ff"/>
<circle cx="274.5" cy="228.5" r="2.0" fill="#4f80ff"/>
<circle cx="279.0" cy="228.5" r="2.0" fill="#4f80ff"/>
<circle cx="199.2" cy="110.8" r="2.0" fill="#4f80ff"/>
<circle cx="166.0" cy="143.7" r="2.0" fill="#4f80ff"/>
<circle cx="166.0" cy="224.7" r="2.0" fill="#4f80ff"/>
<circle cx="314.0" cy="224.7" r="2.0" fill="#4f80ff"/>
<circle cx="199.0" cy="258.0" r="2.0" fill="#4f80ff"/>
<circle cx="281.0" cy="258.0" r="2.0" fill="#4f80ff"/>
<rect x="195.80" y="140.80" width="3.6" height="3.6" fill="#fff" stroke="#4f80ff" stroke-width="0.9"/>
<rect x="207.10" y="140.80" width="3.6" height="3.6" fill="#fff" stroke="#4f80ff" stroke-width="0.9"/>
<rect x="195.80" y="152.10" width="3.6" height="3.6" fill="#fff" stroke="#4f80ff" stroke-width="0.9"/>
<rect x="207.10" y="152.10" width="3.6" height="3.6" fill="#fff" stroke="#4f80ff" stroke-width="0.9"/>
<rect x="269.50" y="140.20" width="3.6" height="3.6" fill="#fff" stroke="#4f80ff" stroke-width="0.9"/>
<rect x="279.90" y="140.20" width="3.6" height="3.6" fill="#fff" stroke="#4f80ff" stroke-width="0.9"/>
<rect x="269.50" y="152.00" width="3.6" height="3.6" fill="#fff" stroke="#4f80ff" stroke-width="0.9"/>
<rect x="279.90" y="152.00" width="3.6" height="3.6" fill="#fff" stroke="#4f80ff" stroke-width="0.9"/>
<rect x="186.80" y="174.80" width="3.6" height="3.6" fill="#fff" stroke="#4f80ff" stroke-width="0.9"/>
<rect x="179.10" y="182.60" width="3.6" height="3.6" fill="#fff" stroke="#4f80ff" stroke-width="0.9"/>
<rect x="194.20" y="182.60" width="3.6" height="3.6" fill="#fff" stroke="#4f80ff" stroke-width="0.9"/>
<rect x="186.80" y="190.20" width="3.6" height="3.6" fill="#fff" stroke="#4f80ff" stroke-width="0.9"/>
<rect x="289.80" y="175.00" width="3.6" height="3.6" fill="#fff" stroke="#4f80ff" stroke-width="0.9"/>
<rect x="282.40" y="182.40" width="3.6" height="3.6" fill="#fff" stroke="#4f80ff" stroke-width="0.9"/>
<rect x="297.40" y="182.40" width="3.6" height="3.6" fill="#fff" stroke="#4f80ff" stroke-width="0.9"/>
<rect x="289.70" y="190.20" width="3.6" height="3.6" fill="#fff" stroke="#4f80ff" stroke-width="0.9"/>
<rect x="196.20" y="213.60" width="3.6" height="3.6" fill="#fff" stroke="#4f80ff" stroke-width="0.9"/>
<rect x="207.00" y="213.60" width="3.6" height="3.6" fill="#fff" stroke="#4f80ff" stroke-width="0.9"/>
<rect x="196.20" y="224.80" width="3.6" height="3.6" fill="#fff" stroke="#4f80ff" stroke-width="0.9"/>
<rect x="207.00" y="224.80" width="3.6" height="3.6" fill="#fff" stroke="#4f80ff" stroke-width="0.9"/>
<rect x="238.30" y="226.60" width="3.6" height="3.6" fill="#fff" stroke="#4f80ff" stroke-width="0.9"/>
<rect x="230.80" y="234.20" width="3.6" height="3.6" fill="#fff" stroke="#4f80ff" stroke-width="0.9"/>
<rect x="245.60" y="234.20" width="3.6" height="3.6" fill="#fff" stroke="#4f80ff" stroke-width="0.9"/>
<rect x="238.30" y="241.80" width="3.6" height="3.6" fill="#fff" stroke="#4f80ff" stroke-width="0.9"/>
<rect x="238.30" y="123.60" width="3.6" height="3.6" fill="#fff" stroke="#4f80ff" stroke-width="0.9"/>
<rect x="245.50" y="131.00" width="3.6" height="3.6" fill="#fff" stroke="#4f80ff" stroke-width="0.9"/>
<rect x="231.10" y="169.90" width="3.6" height="3.6" fill="#fff" stroke="#4f80ff" stroke-width="0.9"/>
<rect x="245.00" y="169.90" width="3.6" height="3.6" fill="#fff" stroke="#4f80ff" stroke-width="0.9"/>
<rect x="223.50" y="182.80" width="3.6" height="3.6" fill="#fff" stroke="#4f80ff" stroke-width="0.9"/>
<rect x="280.50" y="213.80" width="3.6" height="3.6" fill="#fff" stroke="#4f80ff" stroke-width="0.9"/>
<rect x="280.00" y="224.10" width="3.6" height="3.6" fill="#fff" stroke="#4f80ff" stroke-width="0.9"/>
<rect x="269.70" y="224.10" width="3.6" height="3.6" fill="#fff" stroke="#4f80ff" stroke-width="0.9"/>
<rect x="238.40" y="109.00" width="3.6" height="3.6" fill="#fff" stroke="#4f80ff" stroke-width="0.9"/>
<rect x="164.20" y="182.60" width="3.6" height="3.6" fill="#fff" stroke="#4f80ff" stroke-width="0.9"/>
<rect x="312.20" y="182.50" width="3.6" height="3.6" fill="#fff" stroke="#4f80ff" stroke-width="0.9"/>
<rect x="238.40" y="256.20" width="3.6" height="3.6" fill="#fff" stroke="#4f80ff" stroke-width="0.9"/>
<rect x="252.70" y="182.50" width="3.8" height="3.8" fill="#dfe8ff" stroke="#4f80ff" stroke-width="1.5"/>
<rect x="252.70" y="186.10" width="3.8" height="3.8" fill="#dfe8ff" stroke="#4f80ff" stroke-width="1.5"/>
<rect x="238.10" y="196.90" width="3.8" height="3.8" fill="#dfe8ff" stroke="#4f80ff" stroke-width="1.5"/>
<rect x="242.00" y="196.90" width="3.8" height="3.8" fill="#dfe8ff" stroke="#4f80ff" stroke-width="1.5"/>
<rect x="230.70" y="130.60" width="4.4" height="4.4" fill="#4f80ff"/>
<!-- palette -->
<rect x="34" y="405.2" width="7.7" height="8" fill="#fff"/>
<line x1="34.5" y1="405.7" x2="41.3" y2="412.7" stroke="#e00" stroke-width="1.3"/>
<rect x="34" y="413.2" width="7.7" height="4.8" fill="#000"/>
<rect x="42.40" y="405.6" width="13.60" height="4.25" fill="#555555"/>
<rect x="42.40" y="409.8" width="13.60" height="4.05" fill="#6c6c6c"/>
<rect x="42.40" y="413.8" width="13.60" height="4.75" fill="#a2a2a2"/>
<rect x="55.80" y="405.6" width="15.30" height="4.25" fill="#4e2a18"/>
<rect x="55.80" y="409.8" width="15.30" height="4.05" fill="#8a5838"/>
<rect x="55.80" y="413.8" width="15.30" height="4.75" fill="#cc8458"/>
<rect x="70.90" y="405.6" width="15.20" height="4.25" fill="#463216"/>
<rect x="70.90" y="409.8" width="15.20" height="4.05" fill="#84663a"/>
<rect x="70.90" y="413.8" width="15.20" height="4.75" fill="#b89458"/>
<rect x="85.90" y="405.6" width="14.50" height="4.25" fill="#3e3814"/>
<rect x="85.90" y="409.8" width="14.50" height="4.05" fill="#7a7040"/>
<rect x="85.90" y="413.8" width="14.50" height="4.75" fill="#a49c5c"/>
<rect x="100.20" y="405.6" width="14.40" height="4.25" fill="#343a1a"/>
<rect x="100.20" y="409.8" width="14.40" height="4.05" fill="#6a7a44"/>
<rect x="100.20" y="413.8" width="14.40" height="4.75" fill="#90a868"/>
<rect x="114.40" y="405.6" width="15.30" height="4.25" fill="#283c1e"/>
<rect x="114.40" y="409.8" width="15.30" height="4.05" fill="#587a48"/>
<rect x="114.40" y="413.8" width="15.30" height="4.75" fill="#80aa70"/>
<rect x="129.50" y="405.6" width="14.90" height="4.25" fill="#203a20"/>
<rect x="129.50" y="409.8" width="14.90" height="4.05" fill="#4a7048"/>
<rect x="129.50" y="413.8" width="14.90" height="4.75" fill="#78a870"/>
<rect x="144.20" y="405.6" width="15.20" height="4.25" fill="#1a3a2a"/>
<rect x="144.20" y="409.8" width="15.20" height="4.05" fill="#3e7060"/>
<rect x="144.20" y="413.8" width="15.20" height="4.75" fill="#5aa888"/>
<rect x="159.20" y="405.6" width="15.20" height="4.25" fill="#0e3a3a"/>
<rect x="159.20" y="409.8" width="15.20" height="4.05" fill="#3a7070"/>
<rect x="159.20" y="413.8" width="15.20" height="4.75" fill="#5aa8a0"/>
<rect x="174.20" y="405.6" width="14.30" height="4.25" fill="#0e3a40"/>
<rect x="174.20" y="409.8" width="14.30" height="4.05" fill="#3a7078"/>
<rect x="174.20" y="413.8" width="14.30" height="4.75" fill="#60a8b0"/>
<rect x="188.30" y="405.6" width="15.20" height="4.25" fill="#183040"/>
<rect x="188.30" y="409.8" width="15.20" height="4.05" fill="#3e6880"/>
<rect x="188.30" y="413.8" width="15.20" height="4.75" fill="#70a0b8"/>
<rect x="203.30" y="405.6" width="15.20" height="4.25" fill="#1c2c46"/>
<rect x="203.30" y="409.8" width="15.20" height="4.05" fill="#4a6086"/>
<rect x="203.30" y="413.8" width="15.20" height="4.75" fill="#7494bc"/>
<rect x="218.30" y="405.6" width="14.40" height="4.25" fill="#1e2a48"/>
<rect x="218.30" y="409.8" width="14.40" height="4.05" fill="#4e5a88"/>
<rect x="218.30" y="413.8" width="14.40" height="4.75" fill="#7898c0"/>
<rect x="232.50" y="405.6" width="14.40" height="4.25" fill="#2a2848"/>
<rect x="232.50" y="409.8" width="14.40" height="4.05" fill="#58588a"/>
<rect x="232.50" y="413.8" width="14.40" height="4.75" fill="#9890c0"/>
<rect x="246.70" y="405.6" width="15.20" height="4.25" fill="#382848"/>
<rect x="246.70" y="409.8" width="15.20" height="4.05" fill="#6a5888"/>
<rect x="246.70" y="413.8" width="15.20" height="4.75" fill="#a888b8"/>
<rect x="261.70" y="405.6" width="15.20" height="4.25" fill="#40283e"/>
<rect x="261.70" y="409.8" width="15.20" height="4.05" fill="#805070"/>
<rect x="261.70" y="413.8" width="15.20" height="4.75" fill="#c088a8"/>
<rect x="276.70" y="405.6" width="15.20" height="4.25" fill="#48283a"/>
<rect x="276.70" y="409.8" width="15.20" height="4.05" fill="#8a5068"/>
<rect x="276.70" y="413.8" width="15.20" height="4.75" fill="#c88898"/>
<rect x="291.70" y="405.6" width="15.20" height="4.25" fill="#4e2636"/>
<rect x="291.70" y="409.8" width="15.20" height="4.05" fill="#9a5664"/>
<rect x="291.70" y="413.8" width="15.20" height="4.75" fill="#d88a8a"/>
<rect x="306.70" y="405.6" width="13.50" height="4.25" fill="#582420"/>
<rect x="306.70" y="409.8" width="13.50" height="4.05" fill="#985448"/>
<rect x="306.70" y="413.8" width="13.50" height="4.75" fill="#e08c74"/>

<!-- logo -->
<polygon points="40.9,4.9 40.9,15 52.2,15" fill="#7c7c7a"/>
<polygon points="52.2,4.9 46.4,10.3 52.2,15" fill="#e0e0e0"/>
<!-- select arrow -->
<polygon points="13.6,26.8 23.3,36.3 19.8,36.9 22.6,41.7 20.3,43 17.5,38.3 13.9,41.1" fill="#22cdf6" stroke="#1a1a18" stroke-width="0.5" stroke-linejoin="round"/>
<!-- pencil -->
<g transform="translate(9.4,73.8) rotate(-41.8)">
  <path d="M0,0 L4.6,-2.9 L18.4,-2.9 L18.4,2.9 L4.6,2.9 Z" fill="#d6d6d6" stroke="#161614" stroke-width="0.7"/>
  <path d="M18.4,-2.9 L20.9,-2.9 Q23.6,-2.9 23.6,0 Q23.6,2.9 20.9,2.9 L18.4,2.9 Z" fill="#e4e4e4" stroke="#161614" stroke-width="0.7"/>
  <line x1="4.6" y1="0" x2="18.4" y2="0" stroke="#6a6a68" stroke-width="0.7"/>
  <line x1="4.6" y1="-2.9" x2="4.6" y2="2.9" stroke="#6a6a68" stroke-width="0.5"/>
  <circle cx="2.6" cy="0" r="1.0" fill="#222"/>
</g>
<!-- line -->
<line x1="10.7" y1="87.2" x2="25.9" y2="102.1" stroke="#141412" stroke-width="3.6" stroke-linecap="round"/>
<line x1="10.7" y1="87.2" x2="25.9" y2="102.1" stroke="#dcdcdc" stroke-width="2.1" stroke-linecap="round"/>
<!-- rect -->
<rect x="8.9" y="119.6" width="19.4" height="13.2" fill="#171715"/>
<rect x="9.9" y="120.6" width="17.4" height="11.2" fill="#d2d2d2" stroke="#f0f0f0" stroke-width="0.9"/>
<!-- ellipse -->
<ellipse cx="18.2" cy="155.7" rx="8.9" ry="6.0" fill="#171715"/>
<ellipse cx="18.2" cy="155.7" rx="8.4" ry="5.6" fill="#d4d4d4"/>
<!-- pen -->
<path d="M17.1,175.6 L19.3,175.6 L19.6,178 L23,183.6 L20.6,188.6 L15.9,188.6 L13.6,183.6 L16.9,178 Z" fill="#d6d6d6" stroke="#161614" stroke-width="0.6"/>
<line x1="18.25" y1="177" x2="18.25" y2="184" stroke="#2a2a28" stroke-width="0.9"/>
<circle cx="18.25" cy="184.6" r="1.0" fill="#2a2a28"/>
<rect x="14" y="189.6" width="8.4" height="2.3" fill="#d6d6d6"/>
<!-- star -->
<polygon points="19.40,206.00 21.99,212.04 28.53,212.63 23.58,216.96 25.04,223.37 19.40,220.00 13.76,223.37 15.22,216.96 10.27,212.63 16.81,212.04" fill="#d2d2d2" stroke="#161614" stroke-width="0.6" stroke-linejoin="round"/>
<polygon points="24.9,216.6 26.9,218.4 24.9,220.2" fill="#d2d2d2"/>
<!-- text T -->
<text x="10.3" y="250.4" font-family="Liberation Serif" font-weight="bold" font-size="23.4" fill="#dcdcdc" stroke="#dcdcdc" stroke-width="0.7">T</text>
<!-- zoom -->
<line x1="20.2" y1="274.2" x2="24.9" y2="278.9" stroke="#161614" stroke-width="4" stroke-linecap="round"/>
<line x1="20.2" y1="274.2" x2="24.9" y2="278.9" stroke="#dcdcdc" stroke-width="2.6" stroke-linecap="round"/>
<circle cx="16.3" cy="270.1" r="5.3" fill="none" stroke="#161614" stroke-width="3.2"/>
<circle cx="16.3" cy="270.1" r="5.3" fill="none" stroke="#dcdcdc" stroke-width="2.0"/>
<!-- eyedropper -->
<g transform="translate(10.6,309) rotate(-42.5)">
  <path d="M0,0 L1.8,-1.4 L12.4,-1.4 L12.4,1.4 L1.8,1.4 Z" fill="#3a3a38" stroke="#d8d8d8" stroke-width="0.9"/>
  <rect x="11.4" y="-3.1" width="2.4" height="6.2" rx="0.9" fill="#dadada"/>
  <path d="M13.2,-2.2 L18.6,-2.2 Q20.9,-2.2 20.9,0 Q20.9,2.2 18.6,2.2 L13.2,2.2 Z" fill="#dadada"/>
</g>
<!-- stroke/fill -->
<rect x="13.3" y="329.6" width="19.2" height="19.1" fill="#161614"/>
<rect x="13.9" y="330.2" width="18" height="17.9" fill="#fafafa"/>
<rect x="19.4" y="336" width="6.6" height="6.6" fill="#cfcfcf" stroke="#1a1a18" stroke-width="1"/>
<rect x="3.6" y="320.5" width="19.1" height="19.1" fill="#161614"/>
<rect x="4.1" y="321" width="18.1" height="18.1" fill="url(#chk2)"/>
<path d="M25.2,321.2 Q28.4,321.2 29.2,324.4" fill="none" stroke="#d4d4d4" stroke-width="1.1"/>
<polygon points="23.6,321.2 25.8,319.6 25.8,322.8" fill="#d4d4d4"/>
<polygon points="27.5,324 30.9,324 29.2,326.6" fill="#d4d4d4"/>
<!-- segment dropdown -->
<polygon points="539.8,108.6 546.2,108.6 543,111.9" fill="#b0b0ac"/>
<!-- add node icon -->
<line x1="508.3" y1="162.4" x2="521" y2="150.3" stroke="#9ad04a" stroke-width="1.4"/>
<line x1="512.9" y1="149.6" x2="512.9" y2="159.2" stroke="#0a1ef0" stroke-width="2"/>
<line x1="508.2" y1="154.6" x2="517.6" y2="154.6" stroke="#0a1ef0" stroke-width="2"/>
<circle cx="508.3" cy="162.4" r="1.9" fill="#10d8ff" stroke="#1030a0" stroke-width="0.4"/>
<circle cx="521" cy="150.3" r="1.9" fill="#10d8ff" stroke="#1030a0" stroke-width="0.4"/>
<circle cx="515.2" cy="156.9" r="1.7" fill="#10d8ff" stroke="#1030a0" stroke-width="0.4"/>
<!-- delete node icon -->
<line x1="508.3" y1="190.4" x2="521" y2="178.6" stroke="#9ad04a" stroke-width="1.4"/>
<circle cx="508.3" cy="190.4" r="1.9" fill="#10d8ff" stroke="#1030a0" stroke-width="0.4"/>
<circle cx="521" cy="178.6" r="1.9" fill="#10d8ff" stroke="#1030a0" stroke-width="0.4"/>
<line x1="510" y1="179.6" x2="516.6" y2="186.2" stroke="#f01010" stroke-width="1.6"/>
<line x1="516.6" y1="179.6" x2="510" y2="186.2" stroke="#f01010" stroke-width="1.6"/>
<circle cx="515.3" cy="184.6" r="1.0" fill="#10d8ff"/>
<!-- open path icon -->
<polygon points="513.2,206 521.8,212.9 519.8,219.8 509.8,219.8 507.7,212.6" fill="#ffcccc" stroke="#111" stroke-width="1"/>
<path d="M518.6,205.5 L515.8,212 M515.3,206.5 L519.2,209.6" stroke="#e01010" stroke-width="0.9"/>
<circle cx="513.2" cy="206" r="1.9" fill="#0aaaff" stroke="#0010c0" stroke-width="0.6"/>
<circle cx="507.7" cy="212.6" r="1.9" fill="#0aaaff" stroke="#0010c0" stroke-width="0.6"/>
<circle cx="521.8" cy="212.9" r="1.9" fill="#0aaaff" stroke="#0010c0" stroke-width="0.6"/>
<circle cx="509.8" cy="219.8" r="1.9" fill="#0aaaff" stroke="#0010c0" stroke-width="0.6"/>
<circle cx="519.8" cy="219.8" r="1.9" fill="#0aaaff" stroke="#0010c0" stroke-width="0.6"/>
<!-- zoom bottom -->
<circle cx="452.8" cy="412.7" r="3.3" fill="none" stroke="#dadada" stroke-width="1.3"/>
<line x1="455.2" y1="415.1" x2="457.8" y2="417.8" stroke="#dadada" stroke-width="1.5" stroke-linecap="round"/>
<polygon points="481.2,413.2 487.2,413.2 484.2,416.2" fill="#b0b0b0"/>

</svg>
<div class="menu" style="left:68px">File</div>
<div class="menu" style="left:100px">Edit</div>
<div class="menu" style="left:133px">Object</div>
<div class="menu" style="left:177.5px">View</div>
<div class="panel-title">Edit Path</div>
<div class="lbl" style="left:504.5px;top:37.6px;font-size:8.4px;color:#c4c4c0">X</div>
<div class="lbl" style="left:556px;top:37.6px;font-size:8.4px;color:#c4c4c0">Y</div>
<div class="num" style="left:511.4px;top:53.9px">217</div>
<div class="num" style="left:563.2px;top:53.9px">317</div>
<div class="lbl" style="left:505px;top:88.9px;line-height:9.6px;letter-spacing:-0.3px;color:#c4c4c0">Segment<br>Type</div>
<div class="abs" style="left:511.6px;top:112px;font-size:9px;font-weight:bold;color:#f4f4f4;letter-spacing:-0.45px">Curve</div>
<div class="abs" style="left:463.2px;top:406.6px;font-size:9.4px;color:#e8e8e8;letter-spacing:-0.75px">100</div>
</body></html>
